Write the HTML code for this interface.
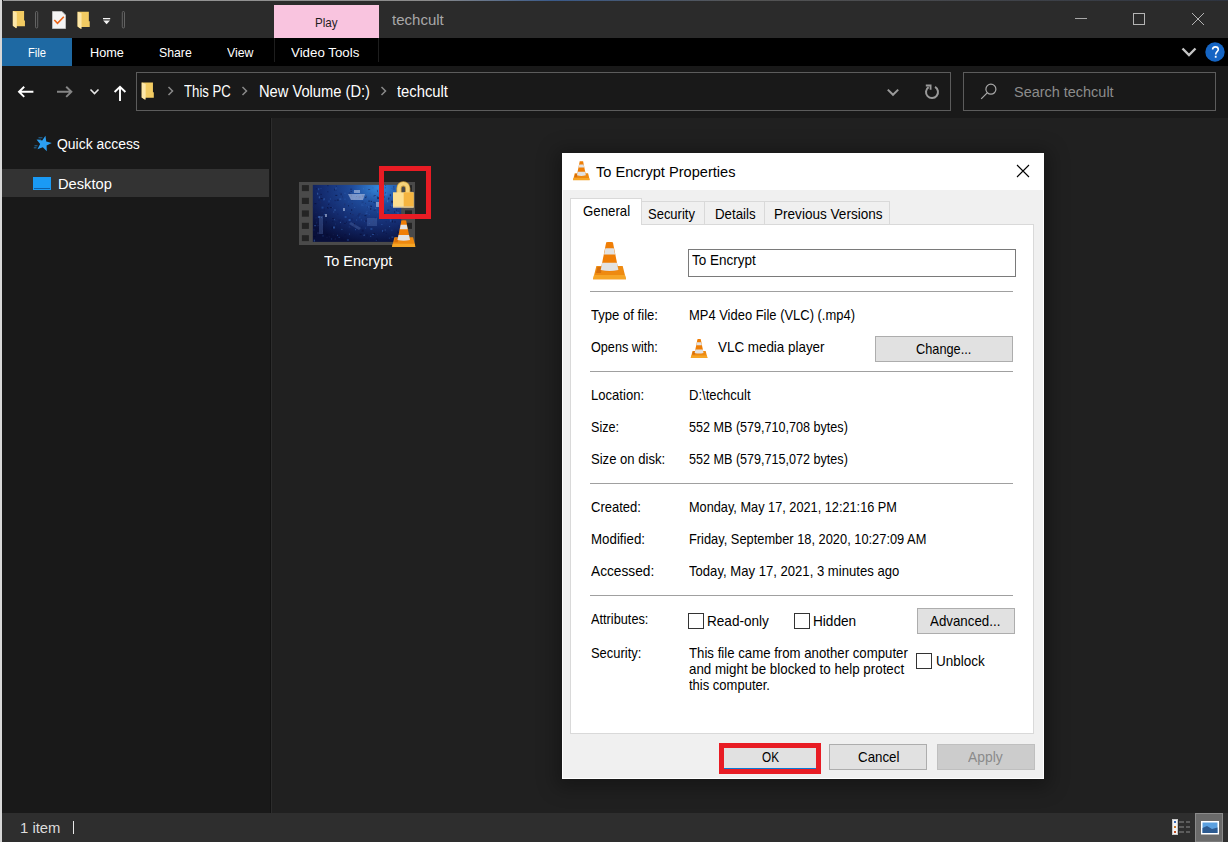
<!DOCTYPE html>
<html><head><meta charset="utf-8">
<style>
*{margin:0;padding:0;box-sizing:border-box}
html,body{width:1228px;height:842px;overflow:hidden;background:#202020;font-family:"Liberation Sans",sans-serif;position:relative}
.a{position:absolute}
.t{position:absolute;white-space:nowrap;transform-origin:0 0}
svg{position:absolute;overflow:visible}

</style></head><body>
<!-- window chrome -->
<div class="a" style="left:0;top:0;width:1228px;height:1px;background:linear-gradient(90deg,#9a9a9a 0%,#8a8a8a 35%,#3a5a8a 45%,#555 60%,#2e3440 100%)"></div>
<div class="a" style="left:0;top:0;width:2px;height:842px;background:#d8d8d8"></div><div class="a" style="left:2px;top:0;width:1px;height:842px;background:#111"></div>
<div class="a" style="left:2px;top:1px;width:1226px;height:37px;background:#2b2b2b"></div>
<div class="a" style="left:2px;top:38px;width:1226px;height:28px;background:#000"></div>
<div class="a" style="left:2px;top:66px;width:1226px;height:52px;background:#191919"></div>
<div class="a" style="left:2px;top:118px;width:269px;height:695px;background:#191919"></div>
<div class="a" style="left:270px;top:118px;width:1px;height:695px;background:#121212"></div><div class="a" style="left:271px;top:118px;width:1px;height:695px;background:#2c2c2c"></div>
<div class="a" style="left:272px;top:118px;width:956px;height:695px;background:#202020"></div>
<div class="a" style="left:2px;top:813px;width:1226px;height:29px;background:#2e2e2e"></div>

<!-- quick access toolbar -->
<svg style="left:0;top:0" width="140" height="38">
  <path d="M12.85 11.00 H24.10 V20.55 H24.96 V26.25 H16.00 V28.25 L12.85 25.80 Z" fill="#f2cb62"/>
  <path d="M12.85 11.00 L16.80 12.50 V28.25 L12.85 25.80 Z" fill="#fde7a8"/>
  <rect x="35.5" y="11.5" width="2.2" height="16.5" rx="1.1" fill="none" stroke="#6a6a6a" stroke-width="0.9"/>
  <path d="M52.5 11.5 H62 L65.5 15 V28.5 H52.5 Z" fill="#f4f4f4" stroke="#bdbdbd" stroke-width="1"/>
  <path d="M54.3 20 L57.5 23.3 L63.8 16.8" fill="none" stroke="#ec6418" stroke-width="1.6"/>
  <path d="M77.60 11.80 H88.85 V21.35 H89.71 V27.05 H80.75 V29.05 L77.60 26.60 Z" fill="#f2cb62"/>
  <path d="M77.60 11.80 L81.55 13.30 V29.05 L77.60 26.60 Z" fill="#fde7a8"/>
  <rect x="103" y="18" width="7.2" height="1.3" fill="#f4f4f4"/>
  <path d="M103.2 20.6 H110 L106.6 24.2 Z" fill="#f4f4f4"/>
  <rect x="122.3" y="11.5" width="2.2" height="16.5" rx="1.1" fill="none" stroke="#6a6a6a" stroke-width="0.9"/>
</svg>

<!-- play tab -->
<div class="a" style="left:274px;top:5px;width:105px;height:33px;background:#f9c4df"></div>
<div class="a" style="left:274px;top:38px;width:1px;height:24px;background:#1e1e1e"></div>
<div class="a" style="left:378px;top:38px;width:1px;height:24px;background:#1e1e1e"></div>
<!-- file tab -->
<div class="a" style="left:2px;top:38px;width:70px;height:28px;background:#1e69a3"></div>

<!-- window controls -->
<svg style="left:1060px;top:0" width="168" height="66">
  <rect x="15" y="18" width="12" height="1" fill="#a8a8a8"/>
  <rect x="73.5" y="13.5" width="11" height="11" fill="none" stroke="#b4b4b4" stroke-width="1"/>
  <path d="M132 13 L144 25 M144 13 L132 25" stroke="#b4b4b4" stroke-width="1"/>
  <path d="M122.5 48.5 L129 55 L135.5 48.5" fill="none" stroke="#c4c4c4" stroke-width="2.4"/>
  <circle cx="155" cy="52" r="9.7" fill="#1565c4"/>
  <path d="M152.6 49.6 C152.6 47.8 153.8 46.9 155.4 46.9 C157.1 46.9 158.3 47.9 158.3 49.5 C158.3 51.6 155.7 51.8 155.7 54.4" fill="none" stroke="#fff" stroke-width="1.6"/>
  <rect x="154.8" y="55.8" width="1.8" height="1.9" fill="#fff"/>
</svg>

<!-- nav arrows + address -->
<svg style="left:0;top:66px" width="1228" height="52">
  <path d="M19 25.8 H33.4 M24.2 20.7 L19 25.8 L24.2 30.9" fill="none" stroke="#ffffff" stroke-width="1.9"/>
  <path d="M57 25.8 H71.4 M66.2 20.7 L71.4 25.8 L66.2 30.9" fill="none" stroke="#858585" stroke-width="1.9"/>
  <path d="M90.5 23.5 L94.5 27.5 L98.5 23.5" fill="none" stroke="#e6e6e6" stroke-width="1.6"/>
  <path d="M120 35 V20.8 M114.6 26 L120 20.8 L125.4 26" fill="none" stroke="#ffffff" stroke-width="1.9"/>
  <rect x="136.5" y="6.5" width="814" height="38" fill="none" stroke="#5c5c5c" stroke-width="1"/>
  <path d="M141.70 16.60 H152.95 V26.15 H153.81 V31.85 H144.85 V33.85 L141.70 31.40 Z" fill="#f2cb62"/>
  <path d="M141.70 16.60 L145.65 18.10 V33.85 L141.70 31.40 Z" fill="#fde7a8"/>
  <path d="M168.5 21 L172.5 25 L168.5 29" fill="none" stroke="#8a8a8a" stroke-width="1.5"/>
  <path d="M242.5 21 L246.5 25 L242.5 29" fill="none" stroke="#8a8a8a" stroke-width="1.5"/>
  <path d="M381.5 21 L385.5 25 L381.5 29" fill="none" stroke="#8a8a8a" stroke-width="1.5"/>
  <path d="M887.8 23.6 L893 28.8 L898.2 23.6" fill="none" stroke="#9a9a9a" stroke-width="2"/>
  <path d="M935.04 20.93 A6 6 0 1 1 928.64 21.13" fill="none" stroke="#9a9a9a" stroke-width="2"/>
  <path d="M925.8 19.5 H930.6 V23.8" fill="none" stroke="#9a9a9a" stroke-width="1.8"/>
  <rect x="963.5" y="6.5" width="252" height="38" fill="none" stroke="#5c5c5c" stroke-width="1"/>
  <circle cx="990.9" cy="23.2" r="5" fill="none" stroke="#a8a8a8" stroke-width="1.2"/>
  <path d="M987.2 26.9 L981.2 32.9" stroke="#a8a8a8" stroke-width="1.2"/>
</svg>

<!-- nav pane -->
<div class="a" style="left:2px;top:169px;width:267px;height:28px;background:#333333"></div>
<svg style="left:0;top:120px" width="60" height="80">
  <path d="M45.44 15.81 L46.24 21.50 L51.77 23.09 L46.60 25.60 L46.80 31.35 L42.81 27.21 L37.41 29.18 L40.11 24.11 L36.57 19.58 L42.23 20.58 Z" fill="#2b9ff2"/>
  <path d="M38.5 17.8 H42.5 M37.5 20 H41 M34.5 25.8 H37.5 M33.8 27.8 H36.5" stroke="#2b9ff2" stroke-width="0.9" opacity="0.7"/>
  <rect x="33" y="57" width="18" height="13" fill="#1a9af5"/>
  <rect x="34" y="68" width="16" height="1" fill="#0e5fa8"/>
</svg>

<!-- file icon -->
<svg style="left:299px;top:182px" width="116" height="63">
  <defs>
    <radialGradient id="thg" cx="0.75" cy="0.05" r="1.0">
      <stop offset="0" stop-color="#3488dc"/>
      <stop offset="0.3" stop-color="#1f4c9c"/>
      <stop offset="0.65" stop-color="#142c70"/>
      <stop offset="1" stop-color="#080f3a"/>
    </radialGradient>
  </defs>
  <rect x="0" y="0" width="116" height="63" fill="#4a4a4a"/>
  <rect x="13.8" y="2.9" width="88.4" height="57" fill="url(#thg)"/>
  <g fill="#242424">
    <rect x="2.9" y="3.1" width="7" height="6"/>
    <rect x="2.9" y="15.8" width="7" height="6.2"/>
    <rect x="2.9" y="28.4" width="7" height="6.3"/>
    <rect x="2.9" y="40.8" width="7" height="6.1"/>
    <rect x="2.9" y="53.2" width="7" height="5.9"/>
    <rect x="106" y="3.1" width="7" height="6"/>
    <rect x="106" y="15.8" width="7" height="6.2"/>
    <rect x="106" y="28.4" width="7" height="6.3"/>
    <rect x="106" y="40.8" width="7" height="6.1"/>
  </g>
  <g opacity="0.55"><rect x="41.6" y="11.2" width="1" height="2" fill="#0a1040"/><rect x="21.9" y="35.0" width="1" height="1" fill="#3a70c8"/><rect x="51.1" y="6.7" width="2" height="1" fill="#101c58"/><rect x="18.9" y="34.0" width="2" height="2" fill="#3a70c8"/><rect x="63.9" y="6.3" width="1" height="1" fill="#4a80d0"/><rect x="17.8" y="50.1" width="1" height="1" fill="#06082a"/><rect x="60.3" y="34.3" width="1" height="2" fill="#2a5ab0"/><rect x="62.9" y="13.2" width="2" height="2" fill="#101c58"/><rect x="19.2" y="6.2" width="1" height="2" fill="#3a70c8"/><rect x="59.5" y="45.6" width="2" height="1" fill="#202a60"/><rect x="44.9" y="16.6" width="2" height="1" fill="#2a5ab0"/><rect x="20.8" y="19.4" width="1" height="2" fill="#202a60"/><rect x="52.4" y="36.4" width="1" height="2" fill="#101c58"/><rect x="49.8" y="44.5" width="1" height="1" fill="#2a5ab0"/><rect x="17.2" y="39.7" width="1" height="2" fill="#1a3070"/><rect x="43.9" y="30.2" width="1" height="1" fill="#202a60"/><rect x="95.0" y="29.0" width="1" height="2" fill="#101c58"/><rect x="74.1" y="38.5" width="1" height="2" fill="#202a60"/><rect x="47.0" y="39.7" width="1" height="1" fill="#0a1040"/><rect x="28.3" y="9.3" width="1" height="1" fill="#0a1040"/><rect x="24.9" y="16.5" width="1" height="1" fill="#4a80d0"/><rect x="28.1" y="25.0" width="1" height="1" fill="#06082a"/><rect x="88.1" y="18.2" width="1" height="2" fill="#4a80d0"/><rect x="89.8" y="55.6" width="1" height="1" fill="#2a5ab0"/><rect x="26.8" y="39.1" width="1" height="2" fill="#0a1040"/><rect x="29.5" y="18.4" width="1" height="2" fill="#2a5ab0"/><rect x="45.6" y="34.0" width="2" height="2" fill="#2a5ab0"/><rect x="95.5" y="38.9" width="1" height="2" fill="#0a1040"/><rect x="82.4" y="24.5" width="1" height="1" fill="#4a80d0"/><rect x="55.2" y="24.9" width="1" height="1" fill="#3a70c8"/><rect x="51.7" y="8.9" width="1" height="1" fill="#0a1040"/><rect x="62.5" y="32.4" width="2" height="1" fill="#1a3070"/><rect x="19.8" y="14.3" width="1" height="2" fill="#4a80d0"/><rect x="35.5" y="22.0" width="1" height="1" fill="#1a3070"/><rect x="23.7" y="29.7" width="1" height="1" fill="#202a60"/><rect x="40.6" y="10.8" width="2" height="1" fill="#1a3070"/><rect x="55.0" y="41.0" width="1" height="2" fill="#0a1040"/><rect x="44.9" y="40.9" width="2" height="1" fill="#0a1040"/><rect x="98.0" y="50.4" width="2" height="1" fill="#06082a"/><rect x="91.9" y="22.5" width="2" height="2" fill="#3a70c8"/><rect x="80.8" y="21.0" width="2" height="1" fill="#3a70c8"/><rect x="83.1" y="47.9" width="1" height="2" fill="#3a70c8"/><rect x="56.2" y="43.1" width="1" height="1" fill="#0a1040"/><rect x="36.1" y="41.0" width="1" height="2" fill="#1a3070"/><rect x="98.8" y="55.4" width="1" height="1" fill="#1a3070"/><rect x="22.6" y="28.8" width="1" height="1" fill="#1a3070"/><rect x="67.5" y="52.4" width="1" height="2" fill="#0a1040"/><rect x="43.4" y="38.3" width="1" height="2" fill="#101c58"/><rect x="78.3" y="29.2" width="1" height="2" fill="#2a5ab0"/><rect x="42.4" y="46.9" width="1" height="1" fill="#4a80d0"/><rect x="77.7" y="7.6" width="1" height="1" fill="#2a5ab0"/><rect x="16.2" y="35.4" width="2" height="1" fill="#202a60"/><rect x="66.4" y="35.7" width="2" height="1" fill="#202a60"/><rect x="27.2" y="33.1" width="1" height="2" fill="#0a1040"/><rect x="69.7" y="31.9" width="1" height="1" fill="#2a5ab0"/><rect x="84.8" y="14.5" width="1" height="1" fill="#06082a"/><rect x="56.9" y="44.9" width="1" height="2" fill="#1a3070"/><rect x="49.8" y="10.1" width="1" height="2" fill="#1a3070"/><rect x="64.0" y="52.6" width="2" height="1" fill="#4a80d0"/><rect x="59.5" y="31.7" width="1" height="1" fill="#0a1040"/><rect x="66.1" y="45.6" width="1" height="1" fill="#2a5ab0"/><rect x="54.5" y="42.8" width="1" height="2" fill="#0a1040"/><rect x="58.4" y="33.4" width="2" height="1" fill="#101c58"/><rect x="35.2" y="18.1" width="2" height="1" fill="#101c58"/><rect x="62.1" y="44.7" width="1" height="1" fill="#101c58"/><rect x="66.5" y="30.7" width="2" height="1" fill="#3a70c8"/><rect x="52.7" y="32.2" width="2" height="1" fill="#202a60"/><rect x="73.9" y="51.1" width="2" height="1" fill="#06082a"/><rect x="86.0" y="10.4" width="1" height="1" fill="#101c58"/><rect x="41.0" y="39.8" width="1" height="1" fill="#4a80d0"/><rect x="71.4" y="46.0" width="2" height="2" fill="#2a5ab0"/><rect x="70.6" y="10.8" width="1" height="1" fill="#2a5ab0"/><rect x="78.0" y="8.1" width="1" height="2" fill="#202a60"/><rect x="85.4" y="11.8" width="2" height="1" fill="#4a80d0"/><rect x="43.0" y="13.7" width="1" height="2" fill="#1a3070"/><rect x="45.3" y="21.5" width="1" height="2" fill="#202a60"/><rect x="15.4" y="21.1" width="2" height="1" fill="#06082a"/><rect x="23.5" y="53.4" width="1" height="1" fill="#3a70c8"/><rect x="36.6" y="5.1" width="1" height="1" fill="#2a5ab0"/><rect x="84.3" y="49.6" width="1" height="1" fill="#06082a"/><rect x="59.9" y="31.2" width="2" height="1" fill="#202a60"/><rect x="21.5" y="6.1" width="1" height="1" fill="#2a5ab0"/><rect x="36.9" y="3.8" width="1" height="1" fill="#101c58"/><rect x="66.1" y="15.1" width="1" height="1" fill="#06082a"/><rect x="14.8" y="57.6" width="1" height="2" fill="#4a80d0"/><rect x="24.9" y="31.9" width="1" height="1" fill="#3a70c8"/><rect x="36.3" y="12.9" width="2" height="1" fill="#06082a"/><rect x="59.5" y="14.2" width="2" height="2" fill="#202a60"/><rect x="29.1" y="22.0" width="1" height="1" fill="#0a1040"/><rect x="15.1" y="43.2" width="2" height="1" fill="#3a70c8"/><rect x="34.9" y="27.5" width="2" height="1" fill="#4a80d0"/><rect x="60.7" y="51.8" width="2" height="1" fill="#06082a"/><rect x="98.3" y="21.7" width="1" height="1" fill="#2a5ab0"/><rect x="98.2" y="48.9" width="1" height="2" fill="#0a1040"/><rect x="77.5" y="17.0" width="1" height="1" fill="#2a5ab0"/><rect x="71.0" y="23.8" width="2" height="1" fill="#06082a"/><rect x="73.4" y="5.4" width="1" height="1" fill="#2a5ab0"/><rect x="52.1" y="17.4" width="2" height="1" fill="#1a3070"/><rect x="34.8" y="56.0" width="1" height="1" fill="#06082a"/><rect x="29.5" y="21.3" width="1" height="1" fill="#101c58"/><rect x="57.0" y="14.0" width="1" height="1" fill="#0a1040"/><rect x="84.1" y="10.8" width="1" height="1" fill="#0a1040"/><rect x="39.6" y="37.5" width="2" height="2" fill="#101c58"/><rect x="87.2" y="11.4" width="1" height="2" fill="#4a80d0"/><rect x="98.5" y="11.1" width="1" height="2" fill="#2a5ab0"/><rect x="90.5" y="37.4" width="2" height="2" fill="#2a5ab0"/><rect x="62.7" y="47.6" width="2" height="2" fill="#0a1040"/><rect x="82.4" y="42.0" width="1" height="1" fill="#3a70c8"/><rect x="17.4" y="37.9" width="1" height="1" fill="#101c58"/><rect x="61.8" y="37.4" width="1" height="1" fill="#3a70c8"/><rect x="14.1" y="46.8" width="2" height="2" fill="#101c58"/><rect x="19.5" y="43.4" width="1" height="1" fill="#06082a"/><rect x="34.0" y="44.5" width="2" height="2" fill="#3a70c8"/><rect x="97.7" y="30.1" width="1" height="1" fill="#4a80d0"/><rect x="92.1" y="18.7" width="2" height="2" fill="#0a1040"/><rect x="69.1" y="7.2" width="1" height="1" fill="#2a5ab0"/><rect x="69.8" y="41.0" width="1" height="1" fill="#2a5ab0"/><rect x="19.0" y="17.7" width="2" height="1" fill="#101c58"/><rect x="71.9" y="18.9" width="1" height="1" fill="#06082a"/><rect x="53.9" y="9.4" width="1" height="1" fill="#3a70c8"/><rect x="94.3" y="3.9" width="1" height="2" fill="#202a60"/><rect x="97.1" y="27.6" width="1" height="1" fill="#06082a"/><rect x="92.6" y="54.1" width="2" height="1" fill="#101c58"/><rect x="26.0" y="31.7" width="1" height="2" fill="#1a3070"/><rect x="84.3" y="30.9" width="2" height="1" fill="#101c58"/><rect x="33.7" y="52.3" width="1" height="1" fill="#202a60"/><rect x="27.5" y="55.1" width="1" height="1" fill="#202a60"/><rect x="76.3" y="25.8" width="1" height="1" fill="#4a80d0"/><rect x="86.1" y="3.0" width="1" height="1" fill="#1a3070"/><rect x="94.6" y="13.7" width="2" height="1" fill="#0a1040"/><rect x="35.6" y="6.5" width="2" height="1" fill="#4a80d0"/><rect x="44.8" y="26.4" width="1" height="1" fill="#06082a"/><rect x="22.5" y="48.8" width="2" height="1" fill="#06082a"/><rect x="35.2" y="17.5" width="1" height="1" fill="#1a3070"/><rect x="81.3" y="26.4" width="2" height="1" fill="#0a1040"/><rect x="92.4" y="54.6" width="2" height="1" fill="#3a70c8"/><rect x="18.1" y="43.2" width="2" height="1" fill="#202a60"/><rect x="69.2" y="18.6" width="2" height="1" fill="#0a1040"/><rect x="28.5" y="25.7" width="1" height="1" fill="#06082a"/><rect x="77.4" y="56.6" width="1" height="2" fill="#06082a"/><rect x="34.3" y="29.5" width="1" height="1" fill="#4a80d0"/><rect x="69.1" y="7.0" width="2" height="1" fill="#202a60"/><rect x="52.8" y="21.2" width="1" height="1" fill="#202a60"/><rect x="60.9" y="16.3" width="1" height="2" fill="#2a5ab0"/><rect x="21.6" y="16.1" width="2" height="1" fill="#06082a"/><rect x="90.1" y="44.1" width="1" height="1" fill="#4a80d0"/><rect x="77.9" y="14.5" width="1" height="1" fill="#06082a"/><rect x="56.6" y="34.5" width="1" height="2" fill="#1a3070"/><rect x="57.1" y="37.5" width="1" height="1" fill="#3a70c8"/><rect x="90.9" y="24.1" width="1" height="1" fill="#202a60"/><rect x="86.8" y="50.9" width="1" height="1" fill="#0a1040"/><rect x="50.4" y="44.9" width="2" height="1" fill="#202a60"/><rect x="13.8" y="24.4" width="1" height="1" fill="#202a60"/><rect x="81.1" y="15.2" width="2" height="2" fill="#2a5ab0"/><rect x="23.2" y="48.3" width="1" height="2" fill="#202a60"/><rect x="80.6" y="3.0" width="1" height="2" fill="#2a5ab0"/><rect x="92.9" y="38.4" width="1" height="2" fill="#06082a"/><rect x="35.5" y="37.9" width="1" height="1" fill="#101c58"/><rect x="39.6" y="54.8" width="1" height="1" fill="#3a70c8"/><rect x="33.0" y="36.0" width="2" height="1" fill="#0a1040"/><rect x="99.5" y="18.2" width="2" height="1" fill="#1a3070"/><rect x="54.7" y="15.8" width="1" height="1" fill="#3a70c8"/><rect x="74.4" y="19.8" width="1" height="1" fill="#0a1040"/><rect x="89.9" y="38.5" width="1" height="1" fill="#101c58"/><rect x="71.2" y="53.8" width="1" height="1" fill="#3a70c8"/><rect x="73.6" y="42.4" width="2" height="1" fill="#1a3070"/><rect x="30.8" y="46.7" width="1" height="1" fill="#101c58"/><rect x="97.2" y="20.0" width="1" height="1" fill="#3a70c8"/><rect x="32.8" y="44.7" width="1" height="2" fill="#06082a"/><rect x="56.4" y="13.2" width="1" height="1" fill="#3a70c8"/><rect x="92.1" y="6.0" width="1" height="1" fill="#2a5ab0"/><rect x="32.1" y="56.5" width="1" height="1" fill="#2a5ab0"/><rect x="74.8" y="13.0" width="2" height="1" fill="#202a60"/><rect x="76.8" y="57.8" width="1" height="1" fill="#2a5ab0"/><rect x="29.8" y="54.4" width="1" height="1" fill="#202a60"/><rect x="70.9" y="23.7" width="1" height="1" fill="#1a3070"/><rect x="28.4" y="3.1" width="1" height="1" fill="#06082a"/><rect x="49.9" y="51.6" width="1" height="1" fill="#3a70c8"/><rect x="79.9" y="19.9" width="1" height="1" fill="#4a80d0"/><rect x="74.5" y="13.7" width="1" height="1" fill="#202a60"/><rect x="45.1" y="52.2" width="2" height="1" fill="#0a1040"/><rect x="35.1" y="37.3" width="1" height="1" fill="#4a80d0"/><rect x="16.8" y="6.3" width="1" height="1" fill="#0a1040"/><rect x="78.1" y="52.3" width="1" height="1" fill="#1a3070"/><rect x="42.6" y="55.4" width="1" height="2" fill="#0a1040"/><rect x="75.4" y="20.3" width="1" height="1" fill="#06082a"/><rect x="75.9" y="35.7" width="1" height="1" fill="#101c58"/><rect x="23.0" y="42.3" width="1" height="1" fill="#202a60"/><rect x="92.4" y="47.7" width="1" height="1" fill="#2a5ab0"/><rect x="14.5" y="54.1" width="2" height="1" fill="#06082a"/><rect x="66.0" y="20.9" width="1" height="1" fill="#1a3070"/><rect x="81.2" y="35.7" width="1" height="1" fill="#3a70c8"/><rect x="35.1" y="6.5" width="1" height="2" fill="#0a1040"/><rect x="60.6" y="11.7" width="1" height="1" fill="#4a80d0"/><rect x="36.6" y="7.5" width="1" height="1" fill="#101c58"/><rect x="98.8" y="56.4" width="1" height="1" fill="#2a5ab0"/><rect x="49.6" y="37.0" width="2" height="2" fill="#3a70c8"/><rect x="86.6" y="39.4" width="1" height="1" fill="#101c58"/><rect x="37.8" y="17.6" width="2" height="1" fill="#06082a"/><rect x="30.9" y="16.5" width="1" height="1" fill="#3a70c8"/><rect x="38.0" y="52.8" width="1" height="1" fill="#3a70c8"/><rect x="47.9" y="57.5" width="2" height="1" fill="#3a70c8"/><rect x="70.0" y="57.4" width="1" height="1" fill="#101c58"/><rect x="89.7" y="15.6" width="1" height="1" fill="#202a60"/><rect x="89.2" y="15.7" width="1" height="2" fill="#0a1040"/><rect x="97.5" y="35.0" width="1" height="2" fill="#101c58"/><rect x="88.3" y="27.6" width="2" height="1" fill="#06082a"/><rect x="22.9" y="35.7" width="1" height="1" fill="#1a3070"/><rect x="45.5" y="10.7" width="1" height="1" fill="#3a70c8"/><rect x="65.4" y="38.7" width="1" height="1" fill="#3a70c8"/><rect x="49.0" y="23.3" width="1" height="1" fill="#06082a"/><rect x="16.5" y="30.2" width="1" height="1" fill="#202a60"/><rect x="22.5" y="24.6" width="2" height="2" fill="#2a5ab0"/><rect x="21.6" y="11.9" width="1" height="1" fill="#06082a"/><rect x="71.2" y="25.9" width="1" height="2" fill="#0a1040"/><rect x="62.5" y="22.5" width="1" height="1" fill="#4a80d0"/><rect x="69.2" y="24.4" width="1" height="1" fill="#4a80d0"/><rect x="51.1" y="11.5" width="1" height="1" fill="#101c58"/><rect x="63.5" y="23.0" width="1" height="1" fill="#2a5ab0"/><rect x="18.2" y="10.7" width="1" height="2" fill="#4a80d0"/><rect x="67.3" y="23.3" width="1" height="1" fill="#2a5ab0"/><rect x="38.2" y="31.6" width="1" height="1" fill="#101c58"/><rect x="56.0" y="47.2" width="1" height="1" fill="#3a70c8"/><rect x="85.8" y="5.3" width="1" height="1" fill="#202a60"/><rect x="66.1" y="37.9" width="2" height="2" fill="#101c58"/><rect x="73.0" y="51.9" width="2" height="1" fill="#3a70c8"/><rect x="66.7" y="13.7" width="1" height="2" fill="#202a60"/><rect x="32.6" y="24.9" width="1" height="1" fill="#2a5ab0"/><rect x="24.4" y="16.5" width="1" height="2" fill="#3a70c8"/><rect x="86.3" y="39.9" width="1" height="1" fill="#1a3070"/><rect x="65.4" y="33.2" width="2" height="1" fill="#06082a"/><rect x="40.3" y="16.6" width="2" height="1" fill="#4a80d0"/><rect x="52.2" y="27.0" width="1" height="2" fill="#0a1040"/><rect x="98.6" y="28.5" width="2" height="1" fill="#202a60"/><rect x="85.7" y="47.5" width="1" height="1" fill="#4a80d0"/><rect x="24.8" y="26.6" width="1" height="2" fill="#101c58"/><rect x="57.7" y="5.1" width="1" height="2" fill="#2a5ab0"/><rect x="40.8" y="42.5" width="1" height="2" fill="#101c58"/><rect x="90.8" y="38.8" width="1" height="1" fill="#2a5ab0"/><rect x="99.5" y="43.2" width="1" height="1" fill="#101c58"/><rect x="98.2" y="30.0" width="2" height="2" fill="#2a5ab0"/><rect x="93.8" y="6.5" width="2" height="1" fill="#1a3070"/><rect x="27.5" y="52.2" width="1" height="1" fill="#06082a"/><rect x="35.7" y="55.9" width="1" height="2" fill="#202a60"/><rect x="36.4" y="30.7" width="1" height="1" fill="#1a3070"/><rect x="30.9" y="25.1" width="2" height="1" fill="#06082a"/><rect x="90.8" y="12.2" width="1" height="2" fill="#06082a"/><rect x="18.0" y="50.1" width="2" height="2" fill="#202a60"/><rect x="63.7" y="51.4" width="1" height="2" fill="#101c58"/><rect x="68.0" y="24.6" width="1" height="1" fill="#1a3070"/><rect x="99.0" y="34.7" width="1" height="1" fill="#1a3070"/><rect x="51.8" y="12.6" width="1" height="2" fill="#0a1040"/><rect x="35.6" y="38.1" width="2" height="1" fill="#1a3070"/><rect x="78.1" y="15.1" width="2" height="2" fill="#06082a"/><rect x="51.0" y="31.1" width="1" height="1" fill="#0a1040"/><rect x="33.3" y="38.8" width="1" height="1" fill="#0a1040"/><rect x="62.6" y="19.6" width="2" height="1" fill="#1a3070"/><rect x="49.3" y="19.5" width="1" height="1" fill="#2a5ab0"/><rect x="67.5" y="29.0" width="1" height="1" fill="#2a5ab0"/><rect x="74.6" y="27.7" width="2" height="1" fill="#101c58"/></g>
  <g fill="#b8c8e8" opacity="0.6">
    <path d="M49 12 H66 L64 18 H52 Z"/>
    <rect x="55" y="8" width="6" height="3"/>
    <rect x="77" y="20" width="6" height="5"/>
    <rect x="26" y="32" width="2" height="3"/>
    <rect x="44" y="26" width="2" height="3"/>
  </g>
  <g fill="#5a78b8" opacity="0.35">
    <rect x="20" y="34" width="4" height="18"/>
    <path d="M52 40 L62 46 L60 48 L50 42 Z"/>
    <rect x="68" y="36" width="10" height="8"/>
  </g>
</svg>
<!-- lock -->
<svg style="left:392px;top:180px" width="24" height="29">
  <path d="M7 13 V8.15 A4.35 4.35 0 0 1 15.7 8.15 V13" fill="none" stroke="#c89a3a" stroke-width="5.2"/>
  <path d="M7 13 V8.15 A4.35 4.35 0 0 1 15.7 8.15 V13" fill="none" stroke="#f6d47a" stroke-width="3.6"/>
  <rect x="1" y="12.3" width="20.6" height="15.2" fill="#fcdf90"/>
  <rect x="11.7" y="12.3" width="9.9" height="15.2" fill="#f4b540"/>
  <rect x="1" y="26.5" width="20.6" height="1" fill="#d0c8b0"/>
</svg>
<!-- red highlight box -->
<div class="a" style="left:379px;top:166px;width:52px;height:53px;border:5px solid #e81c24"></div>
<!-- small vlc on file -->
<svg style="left:391.5px;top:220.3px" width="23.5" height="27.3"><use href="#cone" width="23.5" height="27.3" preserveAspectRatio="none"/></svg>

<!-- dialog -->
<div class="a" style="left:548px;top:140px;width:510px;height:654px;box-shadow:0 3px 18px 6px rgba(0,0,0,0.3);left:562px;top:153px;width:482px;height:626px"></div>
<div class="a" style="left:562px;top:153px;width:482px;height:626px;background:#fff"></div>
<div class="a" style="left:563px;top:190px;width:480px;height:588px;background:#f0f0f0"></div>
<svg style="left:562px;top:153px" width="482" height="40">
  <path d="M455 12 L467 24 M467 12 L455 24" stroke="#000" stroke-width="1.1"/>
</svg>
<!-- tabs -->
<div class="a" style="left:641px;top:201px;width:249px;height:24px;background:#f0f0f0;border:1px solid #d9d9d9;border-bottom:none"></div>
<div class="a" style="left:704px;top:202px;width:1px;height:23px;background:#d9d9d9"></div>
<div class="a" style="left:764px;top:202px;width:1px;height:23px;background:#d9d9d9"></div>
<div class="a" style="left:570px;top:224px;width:464px;height:510px;background:#fff;border:1px solid #d9d9d9"></div>
<div class="a" style="left:570px;top:198px;width:72px;height:26px;background:#fff;border:1px solid #d9d9d9;border-bottom:none"></div><div class="a" style="left:571px;top:224px;width:70px;height:1px;background:#fff"></div>

<svg style="left:0;top:0" width="0" height="0">
  <defs>
  <symbol id="cone" viewBox="0 0 33.1 37.6">
    <path d="M3.4 23.9 H29.7 L33.1 37.6 H0 Z" fill="#ee8a10"/>
    <path d="M1 33 H32 L33.1 37.6 H0 Z" fill="#f6a526"/>
    <path d="M4.5 25 H9 L8 31 H3 Z" fill="#c85e08" opacity="0.6"/>
    <path d="M13.2 0.3 Q16.5 -0.6 19.9 0.3 L25.4 27.9 Q16.5 31 7.7 27.9 Z" fill="#ef7e06"/>
    <path d="M12.35 6.3 H20.75 L22.1 12.5 H11.0 Z" fill="#e2e2e2"/>
    <path d="M9.23 20.8 H23.87 L25.4 27.9 Q16.5 30 7.7 27.9 Z" fill="#e2e2e2"/>
  </symbol>
  </defs>
</svg>
<svg style="left:593.1px;top:241.7px" width="33.1" height="37.6"><use href="#cone" width="33.1" height="37.6"/></svg>
<svg style="left:572.6px;top:160.9px" width="16.8" height="19.5"><use href="#cone" width="16.8" height="19.5"/></svg>
<svg style="left:689.9px;top:339.2px" width="18.2" height="18.9"><use href="#cone" width="18.2" height="18.9"/></svg>
<!-- name textbox -->
<div class="a" style="left:688px;top:249px;width:328px;height:28px;background:#fff;border:1px solid #7a7a7a"></div>
<!-- separators -->
<div class="a" style="left:590px;top:291px;width:423px;height:1px;background:#a0a0a0"></div>
<div class="a" style="left:590px;top:371px;width:423px;height:1px;background:#a0a0a0"></div>
<div class="a" style="left:590px;top:483px;width:423px;height:1px;background:#a0a0a0"></div>
<div class="a" style="left:590px;top:595px;width:423px;height:1px;background:#a0a0a0"></div>
<!-- buttons -->
<div class="a" style="left:875px;top:336px;width:138px;height:26px;background:#e1e1e1;border:1px solid #adadad"></div>
<div class="a" style="left:917px;top:608px;width:98px;height:26px;background:#e1e1e1;border:1px solid #adadad"></div>
<div class="a" style="left:724px;top:748px;width:93px;height:21px;background:#e1e1e1;border-bottom:1px solid #0a78d4"></div>
<div class="a" style="left:829px;top:744px;width:98px;height:26px;background:#e1e1e1;border:1px solid #adadad"></div>
<div class="a" style="left:937px;top:744px;width:98px;height:26px;background:#cccccc;border:1px solid #bfbfbf"></div>
<div class="a" style="left:719px;top:743px;width:102px;height:31px;border:5px solid #e81c24"></div>
<!-- checkboxes -->
<div class="a" style="left:688px;top:613px;width:16px;height:16px;background:#fff;border:1px solid #333"></div>
<div class="a" style="left:794px;top:613px;width:16px;height:16px;background:#fff;border:1px solid #333"></div>
<div class="a" style="left:916px;top:653px;width:16px;height:16px;background:#fff;border:1px solid #333"></div>

<!-- status bar icons -->
<svg style="left:1160px;top:813px" width="68" height="29">
  <rect x="12.5" y="6.5" width="5" height="15" fill="#f4f4f4" stroke="#c8c8c8" stroke-width="1"/>
  <rect x="14" y="8" width="2" height="2" fill="#3a6ab8"/>
  <rect x="14" y="13" width="2" height="2" fill="#c8782a"/>
  <rect x="14" y="18" width="2" height="2" fill="#c04a20"/>
  <path d="M19 9 H24 M26 9 H30 M19 14 H24 M26 14 H30 M19 19 H24 M26 19 H30" stroke="#8a8a8a" stroke-width="1"/>
  <rect x="35" y="0" width="28" height="29" fill="#6a6a6a"/>
  <rect x="35.5" y="0.5" width="27" height="28.5" fill="none" stroke="#8a8a8a" stroke-width="1"/>
  <rect x="41" y="8" width="18" height="13.5" fill="#ffffff"/>
  <rect x="42.5" y="9.5" width="15" height="10.5" fill="#5aa0e0"/>
  <path d="M42.5 15 L47 13 L52 16 L57.5 14.5 V20 H42.5 Z" fill="#2c5a90"/>
</svg>
<div class="a" style="left:73px;top:821px;width:1px;height:13px;background:#e8e8e8"></div>

<div class="t" style="left:315.40px;top:16.97px;font-size:12.20px;line-height:12.20px;color:#1e1e1e;transform:scaleX(0.9524);">Play</div>
<div class="t" style="left:392.20px;top:12.52px;font-size:14.50px;line-height:14.50px;color:#a8a8a8;transform:scaleX(1.0362);">techcult</div>
<div class="t" style="left:27.60px;top:45.52px;font-size:13.20px;line-height:13.20px;color:#ffffff;transform:scaleX(0.8504);">File</div>
<div class="t" style="left:89.70px;top:45.52px;font-size:13.20px;line-height:13.20px;color:#ffffff;transform:scaleX(0.9628);">Home</div>
<div class="t" style="left:159.00px;top:45.62px;font-size:13.20px;line-height:13.20px;color:#ffffff;transform:scaleX(0.9315);">Share</div>
<div class="t" style="left:227.20px;top:45.62px;font-size:13.20px;line-height:13.20px;color:#ffffff;transform:scaleX(0.9362);">View</div>
<div class="t" style="left:291.30px;top:46.02px;font-size:13.20px;line-height:13.20px;color:#ffffff;transform:scaleX(1.0091);">Video Tools</div>
<div class="t" style="left:184.00px;top:83.62px;font-size:15.80px;line-height:15.80px;color:#ffffff;transform:scaleX(0.8344);">This PC</div>
<div class="t" style="left:258.60px;top:83.52px;font-size:15.80px;line-height:15.80px;color:#ffffff;transform:scaleX(0.9296);">New Volume (D:)</div>
<div class="t" style="left:397.40px;top:83.52px;font-size:15.80px;line-height:15.80px;color:#ffffff;transform:scaleX(0.9363);">techcult</div>
<div class="t" style="left:1014.30px;top:84.03px;font-size:15.20px;line-height:15.20px;color:#8c8c8c;transform:scaleX(0.9516);">Search techcult</div>
<div class="t" style="left:57.30px;top:135.93px;font-size:15.20px;line-height:15.20px;color:#ffffff;transform:scaleX(0.9170);">Quick access</div>
<div class="t" style="left:58.00px;top:176.30px;font-size:15.00px;line-height:15.00px;color:#ffffff;transform:scaleX(0.9780);">Desktop</div>
<div class="t" style="left:324.30px;top:252.50px;font-size:15.00px;line-height:15.00px;color:#ffffff;transform:scaleX(0.9651);">To Encrypt</div>
<div class="t" style="left:19.80px;top:820.30px;font-size:15.00px;line-height:15.00px;color:#dcdcdc;transform:scaleX(0.9893);">1 item</div>
<div class="t" style="left:596.30px;top:164.05px;font-size:15.30px;line-height:15.30px;color:#000000;transform:scaleX(0.9537);">To Encrypt Properties</div>
<div class="t" style="left:582.60px;top:203.89px;font-size:14.30px;line-height:14.30px;color:#000000;transform:scaleX(0.9278);">General</div>
<div class="t" style="left:648.40px;top:206.89px;font-size:14.30px;line-height:14.30px;color:#000000;transform:scaleX(0.9079);">Security</div>
<div class="t" style="left:714.50px;top:206.89px;font-size:14.30px;line-height:14.30px;color:#000000;transform:scaleX(0.9309);">Details</div>
<div class="t" style="left:774.10px;top:206.59px;font-size:14.30px;line-height:14.30px;color:#000000;transform:scaleX(0.9487);">Previous Versions</div>
<div class="t" style="left:692.40px;top:252.89px;font-size:14.30px;line-height:14.30px;color:#000000;transform:scaleX(0.9442);">To Encrypt</div>
<div class="t" style="left:590.70px;top:308.19px;font-size:14.30px;line-height:14.30px;color:#000000;transform:scaleX(0.9160);">Type of file:</div>
<div class="t" style="left:688.70px;top:308.19px;font-size:14.30px;line-height:14.30px;color:#000000;transform:scaleX(0.9055);">MP4 Video File (VLC) (.mp4)</div>
<div class="t" style="left:590.70px;top:340.09px;font-size:14.30px;line-height:14.30px;color:#000000;transform:scaleX(0.8847);">Opens with:</div>
<div class="t" style="left:718.40px;top:340.09px;font-size:14.30px;line-height:14.30px;color:#000;transform:scaleX(0.9371);">VLC media player</div>
<div class="t" style="left:916.10px;top:342.09px;font-size:14.30px;line-height:14.30px;color:#000;transform:scaleX(0.8916);">Change...</div>
<div class="t" style="left:590.70px;top:388.39px;font-size:14.30px;line-height:14.30px;color:#000000;transform:scaleX(0.9146);">Location:</div>
<div class="t" style="left:688.70px;top:388.39px;font-size:14.30px;line-height:14.30px;color:#000000;transform:scaleX(0.9117);">D:\techcult</div>
<div class="t" style="left:590.70px;top:420.29px;font-size:14.30px;line-height:14.30px;color:#000000;transform:scaleX(0.8810);">Size:</div>
<div class="t" style="left:688.70px;top:420.29px;font-size:14.30px;line-height:14.30px;color:#000000;transform:scaleX(0.8805);">552 MB (579,710,708 bytes)</div>
<div class="t" style="left:590.70px;top:452.29px;font-size:14.30px;line-height:14.30px;color:#000000;transform:scaleX(0.9139);">Size on disk:</div>
<div class="t" style="left:688.70px;top:452.29px;font-size:14.30px;line-height:14.30px;color:#000000;transform:scaleX(0.8805);">552 MB (579,715,072 bytes)</div>
<div class="t" style="left:590.70px;top:499.99px;font-size:14.30px;line-height:14.30px;color:#000000;transform:scaleX(0.9099);">Created:</div>
<div class="t" style="left:688.70px;top:499.99px;font-size:14.30px;line-height:14.30px;color:#000000;transform:scaleX(0.8910);">Monday, May 17, 2021, 12:21:16 PM</div>
<div class="t" style="left:590.70px;top:531.89px;font-size:14.30px;line-height:14.30px;color:#000000;transform:scaleX(0.9307);">Modified:</div>
<div class="t" style="left:688.70px;top:531.89px;font-size:14.30px;line-height:14.30px;color:#000000;transform:scaleX(0.8977);">Friday, September 18, 2020, 10:27:09 AM</div>
<div class="t" style="left:590.70px;top:563.99px;font-size:14.30px;line-height:14.30px;color:#000000;transform:scaleX(0.9597);">Accessed:</div>
<div class="t" style="left:688.70px;top:563.99px;font-size:14.30px;line-height:14.30px;color:#000000;transform:scaleX(0.9164);">Today, May 17, 2021, 3 minutes ago</div>
<div class="t" style="left:590.70px;top:611.99px;font-size:14.30px;line-height:14.30px;color:#000000;transform:scaleX(0.8915);">Attributes:</div>
<div class="t" style="left:707.30px;top:614.09px;font-size:14.30px;line-height:14.30px;color:#000;transform:scaleX(0.9498);">Read-only</div>
<div class="t" style="left:813.40px;top:614.09px;font-size:14.30px;line-height:14.30px;color:#000;transform:scaleX(0.9530);">Hidden</div>
<div class="t" style="left:930.20px;top:614.29px;font-size:14.30px;line-height:14.30px;color:#000;transform:scaleX(0.9320);">Advanced...</div>
<div class="t" style="left:590.70px;top:646.39px;font-size:14.30px;line-height:14.30px;color:#000000;transform:scaleX(0.9042);">Security:</div>
<div class="t" style="left:688.70px;top:646.39px;font-size:14.30px;line-height:14.30px;color:#000000;transform:scaleX(0.9242);">This file came from another computer</div>
<div class="t" style="left:688.70px;top:662.29px;font-size:14.30px;line-height:14.30px;color:#000;transform:scaleX(0.9334);">and might be blocked to help protect</div>
<div class="t" style="left:688.70px;top:678.09px;font-size:14.30px;line-height:14.30px;color:#000;transform:scaleX(0.9099);">this computer.</div>
<div class="t" style="left:935.60px;top:654.09px;font-size:14.30px;line-height:14.30px;color:#000;transform:scaleX(0.9440);">Unblock</div>
<div class="t" style="left:761.80px;top:749.69px;font-size:14.30px;line-height:14.30px;color:#000;transform:scaleX(0.8227);">OK</div>
<div class="t" style="left:857.50px;top:749.69px;font-size:14.30px;line-height:14.30px;color:#000;transform:scaleX(0.9324);">Cancel</div>
<div class="t" style="left:968.00px;top:749.69px;font-size:14.30px;line-height:14.30px;color:#8a8a8a;transform:scaleX(0.9697);">Apply</div>
</body></html>
